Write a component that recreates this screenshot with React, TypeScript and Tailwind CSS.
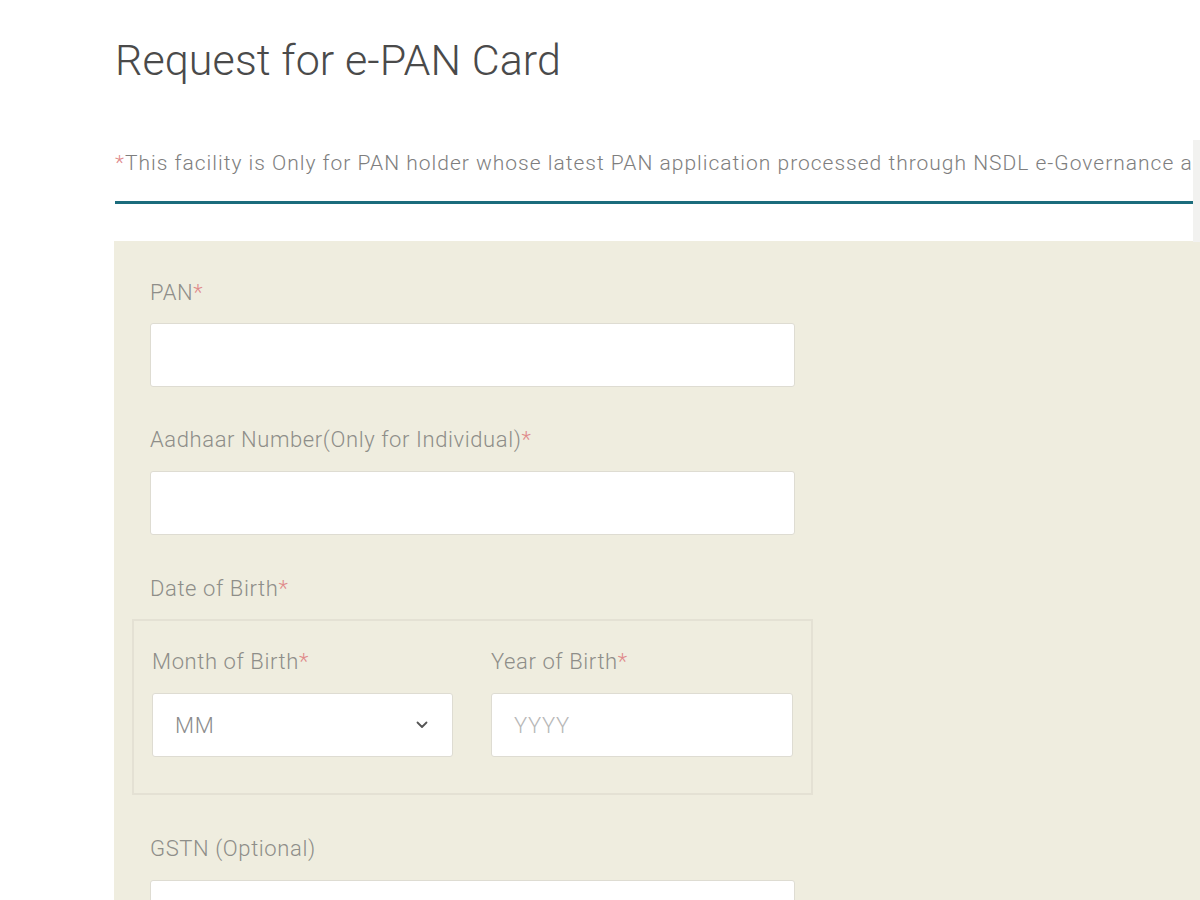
import React from "react";

function Label({ text, required = true }: { text: string; required?: boolean }) {
  return (
    <div className="h-[30px] flex items-center text-[22px] leading-[30px] text-[#8e8e89] font-light tracking-[0.6px] whitespace-nowrap">
      {text}
      {required && <span className="text-[#e08a8a]">*</span>}
    </div>
  );
}

function TextInput({ className = "", placeholder = "" }: { className?: string; placeholder?: string }) {
  return (
    <div
      className={`h-[64px] bg-white border border-[#dedcd2] rounded-[3px] flex items-center pl-[22px] text-[22px] font-light tracking-[0.6px] text-[#b8b8b8] ${className}`}
    >
      {placeholder}
    </div>
  );
}

export default function App() {
  return (
    <div
      className="relative w-[1200px] h-[900px] overflow-hidden bg-white"
      style={{ fontFamily: "Roboto, 'Liberation Sans', sans-serif" }}
    >
      <div className="pl-[115px] pt-[36px]">
        <h1 className="text-[43px] leading-[48px] font-light text-[#4a4a4a] whitespace-nowrap tracking-[0.1px]">
          Request for e-PAN Card
        </h1>
        <div className="mt-[65px] w-[1078px]">
          <p className="text-[21px] leading-[28px] font-light text-[#7e7e7e] whitespace-nowrap tracking-[1px]">
            <span className="text-[#e08a8a]">*</span>This facility is Only for PAN holder whose latest PAN application processed through NSDL e-Governance a
          </p>
          <div className="mt-[24px] h-[3px] bg-[#1b6c7c]" />
        </div>
      </div>

      <div className="ml-[114px] mt-[37px] bg-[#efeddf] pl-[18px] pt-[37px] pb-[40px] min-h-[700px]">
        <div className="ml-[18px] w-[645px]">
          <Label text="PAN" />
          <TextInput className="mt-[15px]" />
        </div>
        <div className="ml-[18px] w-[645px] mt-[38px]">
          <Label text="Aadhaar Number(Only for Individual)" />
          <TextInput className="mt-[16px]" />
        </div>
        <div className="ml-[18px] w-[645px] mt-[39px]">
          <Label text="Date of Birth" />
        </div>
        <div className="mt-[15px] w-[681px] border-2 border-[#e4e1d4] pl-[18px] pr-[18px] pt-[26px] pb-[36px] flex gap-[38px]">
          <div className="w-[301px]">
            <Label text="Month of Birth" />
            <div className="mt-[16px] h-[64px] bg-white border border-[#dedcd2] rounded-[3px] flex items-center justify-between pl-[22px] pr-[24px] text-[22px] font-light tracking-[0.6px] text-[#8c8c8c]">
              <span>MM</span>
              <svg width="12" height="8" viewBox="0 0 12 8" fill="none">
                <path d="M1.5 1.5 L6 6 L10.5 1.5" stroke="#555" strokeWidth="1.8" strokeLinecap="round" strokeLinejoin="round" />
              </svg>
            </div>
          </div>
          <div className="w-[302px]">
            <Label text="Year of Birth" />
            <TextInput className="mt-[16px]" placeholder="YYYY" />
          </div>
        </div>
        <div className="ml-[18px] w-[645px] mt-[39px]">
          <Label text="GSTN (Optional)" required={false} />
          <TextInput className="mt-[16px]" />
        </div>
      </div>
      <div className="absolute right-0 top-[140px] w-[7px] h-[102px] bg-[#f2f2f0]" />
    </div>
  );
}
